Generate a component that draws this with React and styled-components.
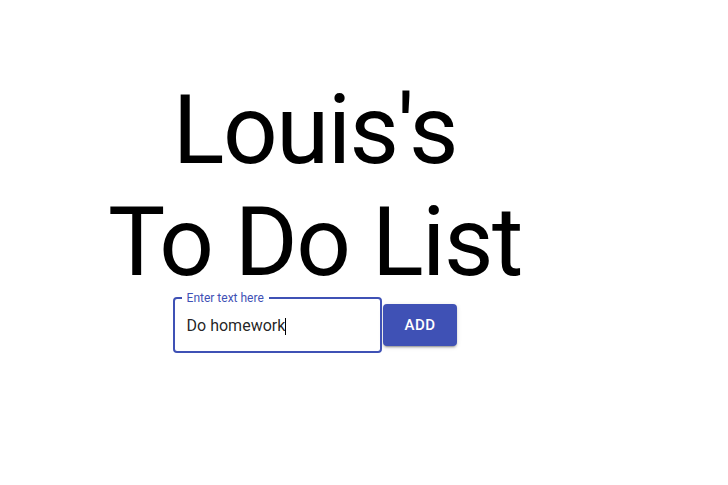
import React, { useEffect, useRef, useState } from "react";
import styled, { createGlobalStyle } from "styled-components";

const Global = createGlobalStyle`
  html, body { margin: 0; padding: 0; background: #fff; }
  body { font-family: Roboto, "Helvetica", "Arial", sans-serif; }
`;

const Page = styled.main`
  width: 630px;
  padding-top: 74px;
  display: flex;
  flex-direction: column;
  align-items: center;
`;

const Title = styled.h1`
  margin: 0;
  font-family: Roboto, "Helvetica", "Arial", sans-serif;
  font-weight: 400;
  font-size: 96px;
  line-height: 112px;
  letter-spacing: -1.5px;
  color: #000;
  text-align: center;
`;

const Form = styled.form`
  display: flex;
  align-items: center;
  margin-top: -1px;
`;

const Field = styled.div`
  position: relative;
  width: 209px;
  height: 56px;
  box-sizing: border-box;
  border: 2px solid #3f51b5;
  border-radius: 4px;
  display: flex;
  align-items: center;
`;

const Label = styled.label`
  position: absolute;
  top: -8px;
  left: 7px;
  padding: 0 5px;
  background: #fff;
  font-size: 12px;
  line-height: 14px;
  color: #3f51b5;
  font-family: Roboto, "Helvetica", "Arial", sans-serif;
`;

const Input = styled.input`
  border: 0;
  outline: none;
  background: transparent;
  width: 100%;
  padding: 0 12px;
  font-family: Roboto, "Helvetica", "Arial", sans-serif;
  font-size: 16px;
  color: rgba(0, 0, 0, 0.87);
  caret-color: transparent;
`;

const CaretLayer = styled.div`
  position: absolute;
  left: 12px;
  top: 0;
  bottom: 0;
  display: flex;
  align-items: center;
  pointer-events: none;
  font-family: Roboto, "Helvetica", "Arial", sans-serif;
  font-size: 16px;
  white-space: pre;
`;

const Ghost = styled.span`
  visibility: hidden;
`;

const Caret = styled.span`
  display: inline-block;
  width: 1px;
  height: 17px;
  margin-top: 2px;
  background: #000;
`;

const AddButton = styled.button`
  margin-left: 1px;
  height: 42px;
  padding: 0 22px;
  border: 0;
  border-radius: 4px;
  background: #3f51b5;
  color: #fff;
  font-family: Roboto, "Helvetica", "Arial", sans-serif;
  font-weight: 500;
  font-size: 15px;
  letter-spacing: 0.43px;
  text-transform: uppercase;
  box-shadow: 0px 3px 1px -2px rgba(0,0,0,0.2), 0px 2px 2px 0px rgba(0,0,0,0.14), 0px 1px 5px 0px rgba(0,0,0,0.12);
  cursor: pointer;
`;

export default function App() {
  const [value, setValue] = useState("Do homework");
  const ref = useRef(null);
  useEffect(() => {
    const el = ref.current;
    if (el) {
      el.focus();
      el.setSelectionRange(el.value.length, el.value.length);
    }
  }, []);
  return (
    <>
      <Global />
      <Page>
        <Title>
          Louis's
          <br />
          To Do List
        </Title>
        <Form onSubmit={(e) => e.preventDefault()}>
          <Field>
            <Label htmlFor="todo">Enter text here</Label>
            <Input id="todo" ref={ref} value={value} onChange={(e) => setValue(e.target.value)} />
            <CaretLayer aria-hidden="true">
              <Ghost>{value}</Ghost>
              <Caret />
            </CaretLayer>
          </Field>
          <AddButton type="submit">Add</AddButton>
        </Form>
      </Page>
    </>
  );
}
